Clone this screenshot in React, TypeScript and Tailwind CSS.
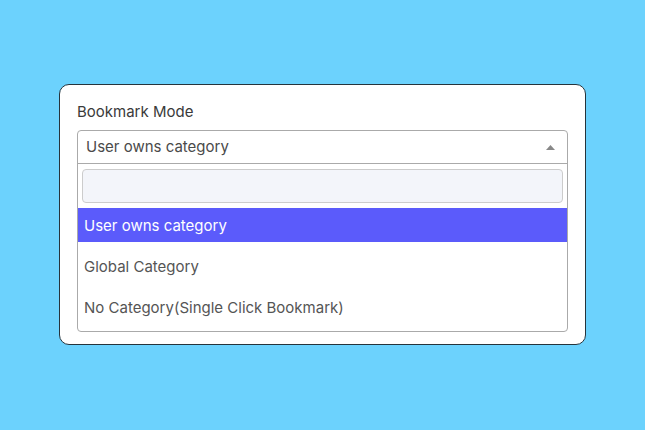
export default function App() {
  const options = ['User owns category', 'Global Category', 'No Category(Single Click Bookmark)'];

  return (
    <div
      className="w-[645px] h-[430px] bg-[#6cd2fd] flex items-start justify-center pt-[84px]"
      style={{ fontFamily: 'Inter, "Noto Sans", sans-serif' }}
    >
      <div className="w-[527px] h-[261px] bg-white border-[1.5px] border-[#26343c] rounded-[10px] px-[17px] pt-[16px]">
        <div className="text-[15px] leading-[22px] text-[#3a3a3a] mb-[7px]">Bookmark Mode</div>

        <div className="border border-[#aaaaaa] rounded-[4px] overflow-hidden">
          {/* select */}
          <div className="h-[33px] flex items-center justify-between pl-[8px] pr-[12px] border-b border-[#aaaaaa]">
            <span className="text-[15px] text-[#4a4a4a]">User owns category</span>
            <svg width="9" height="5" viewBox="0 0 9 5">
              <polygon points="0,5 4.5,0 9,5" fill="#888888" />
            </svg>
          </div>

          {/* dropdown */}
          <div className="pt-[5px]">
            <div className="px-[4px] pb-[5px]">
              <div className="h-[34px] bg-[#f3f5fa] border border-[#cccccc] rounded-[4px]" />
            </div>
            <div className="h-[34px] bg-[#5b5bfb] text-white flex items-center px-[6px] pt-[2px] text-[15px]">
              {options[0]}
            </div>
            <div className="pt-[4px] pb-[3px]">
              {options.slice(1).map(o => (
                <div key={o} className="h-[41px] flex items-center px-[6px] pt-[2px] text-[15px] text-[#555555]">
                  {o}
                </div>
              ))}
            </div>
          </div>
        </div>
      </div>
    </div>
  );
}
